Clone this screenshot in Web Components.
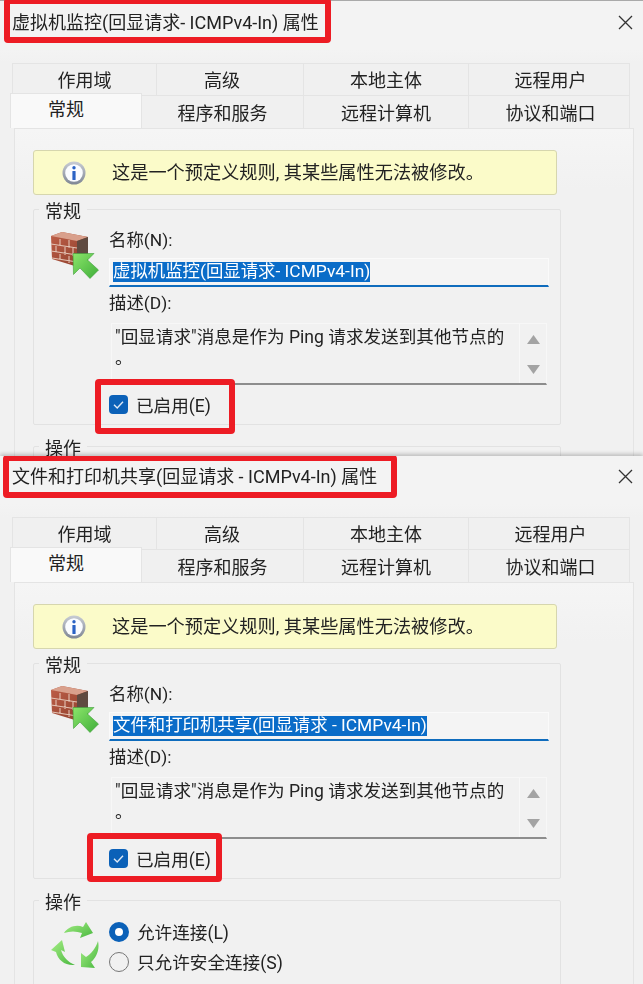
<!DOCTYPE html>
<html lang="zh-CN">
<head>
<meta charset="utf-8">
<title>防火墙规则属性</title>
<style>
  html, body { margin: 0; height: 984px; overflow: hidden; background: #f1f1f1; }
  body { font: 18px/24px Roboto, "Noto Sans CJK SC", sans-serif; color: #222; }
</style>
</head>
<body>

<rule-dialog style="height:456px; --title-h:63px; --title-top:10px; --top-line:#a9a9a9">
  <span slot="title">虚拟机监控(回显请求- ICMPv4-In) 属性</span>
  <red-mark style="left:4px; top:-2px; width:327px; height:45px"></red-mark>
  <tab-strip></tab-strip>
  <rule-panel>
    <info-bar>这是一个预定义规则, 其某些属性无法被修改。</info-bar>
    <group-box legend="常规">
      <wall-icon slot="icon"></wall-icon>
      <field-label>名称(N):</field-label>
      <name-field sel="虚拟机监控(回显请求- ICMPv4-In)"></name-field>
      <field-label style="margin-top:4px">描述(D):</field-label>
      <desc-field>"回显请求"消息是作为 Ping 请求发送到其他节点的<br>。</desc-field>
      <check-row>已启用(E)</check-row>
    </group-box>
    <group-box legend="操作" style="margin-top:7px"></group-box>
  </rule-panel>
  <red-mark style="left:95px; top:379px; width:140px; height:55px"></red-mark>
</rule-dialog>

<rule-dialog style="height:528px; --title-h:61px; --title-top:8px; --top-line:#f3f3f3">
  <span slot="title">文件和打印机共享(回显请求 - ICMPv4-In) 属性</span>
  <red-mark style="left:3px; top:-1px; width:394px; height:43px"></red-mark>
  <tab-strip></tab-strip>
  <rule-panel>
    <info-bar>这是一个预定义规则, 其某些属性无法被修改。</info-bar>
    <group-box legend="常规">
      <wall-icon slot="icon"></wall-icon>
      <field-label>名称(N):</field-label>
      <name-field sel="文件和打印机共享(回显请求 - ICMPv4-In)"></name-field>
      <field-label style="margin-top:4px">描述(D):</field-label>
      <desc-field>"回显请求"消息是作为 Ping 请求发送到其他节点的<br>。</desc-field>
      <check-row>已启用(E)</check-row>
    </group-box>
    <group-box legend="操作" style="margin-top:7px">
      <flow-icon slot="icon"></flow-icon>
      <radio-row checked style="margin-top:-2px">允许连接(L)</radio-row>
      <radio-row>只允许安全连接(S)</radio-row>
    </group-box>
  </rule-panel>
  <red-mark style="left:87px; top:377px; width:135px; height:49px"></red-mark>
</rule-dialog>

<script>
// small helper, every element here is just a template + open shadow root
function define(name, html, init) {
  const template = document.createElement('template');
  template.innerHTML = html;
  customElements.define(name, class extends HTMLElement {
    constructor() {
      super();
      this.attachShadow({mode: 'open'});
      this.shadowRoot.appendChild(template.content.cloneNode(true));
    }
    connectedCallback() {
      if (init) init(this, this.shadowRoot);
    }
  });
}

define('rule-dialog', `
<style>
  :host { display: block; position: relative; overflow: visible; background: #f1f1f1; box-shadow: 0 -2px 4px rgba(0,0,0,.22); }
  .clip { height: 100%; overflow: hidden; filter: blur(.3px); }
  .title { height: var(--title-h); box-sizing: border-box; padding: var(--title-top) 0 0 12px; background: linear-gradient(#f3f3f3 78%, #f1f1f1); border-top: 1px solid var(--top-line); display: flex; justify-content: space-between; align-items: flex-start; }
  .close { width: 15px; height: 15px; margin: 4px 10px 0 0; }
</style>
<div class="clip">
  <div class="title">
    <slot name="title"></slot>
    <svg class="close" viewBox="0 0 15 15"><path d="M1 1 14 14M14 1 1 14" stroke="#333" stroke-width="1.3" fill="none"/></svg>
  </div>
  <slot></slot>
</div>`);

define('red-mark', `
<style>
  :host { display: block; position: absolute; box-sizing: border-box; border: 6px solid #ed1c24; border-radius: 4px; z-index: 3; }
</style>`);

define('tab-item', `
<style>
  :host { display: flex; align-items: center; justify-content: center; box-sizing: border-box; height: 100%; padding-top: 3px; border: 1px solid #e4e4e4; border-width: 1px 1px 0 0; background: #f0f0f0; }
  :host([active]) { background: #f9f9f9; border-width: 1px 1px 0 1px; height: 35px; margin-top: -2px; padding-top: 0; padding-bottom: 3px; position: relative; z-index: 1; }
  :host([first]) { border-left: 1px solid #e4e4e4; }
</style>
<slot></slot>`);

define('tab-strip', `
<style>
  :host { display: block; }
  .row { display: flex; height: 32px; padding-left: 12px; }
  .row + .row { height: 33px; padding-left: 10px; }
</style>
<div class="row">
  <tab-item first style="width:145px">作用域</tab-item>
  <tab-item style="width:147px; padding-right:16px">高级</tab-item>
  <tab-item style="width:165px">本地主体</tab-item>
  <tab-item style="width:161px; padding-left:3px">远程用户</tab-item>
</div>
<div class="row">
  <tab-item active style="width:132px; padding-right:20px">常规</tab-item>
  <tab-item style="width:162px">程序和服务</tab-item>
  <tab-item style="width:165px">远程计算机</tab-item>
  <tab-item style="width:161px; padding-left:3px">协议和端口</tab-item>
</div>`);

define('rule-panel', `
<style>
  :host { display: block; box-sizing: border-box; width: 620px; margin-left: 14px; padding: 21px 0 0 18px; height: 900px; border: 1px solid #e4e4e4; border-width: 1px 1px 0 1px; background: linear-gradient(#f5f5f5, #f1f1f1 60px); }
</style>
<slot></slot>`);

define('info-bar', `
<style>
  :host { display: flex; align-items: center; box-sizing: border-box; width: 524px; height: 45px; padding: 0 0 0 28px; gap: 26px; background: #fbfbc9; border: 1px solid #d6d6ae; border-radius: 3px; font-size: 18.2px; }
  svg { width: 24px; height: 24px; flex: none; }
</style>
<svg viewBox="0 0 24 24">
  <defs><linearGradient id="ring" x1="0" y1="0" x2="0" y2="1"><stop offset="0" stop-color="#c8ccd4"/><stop offset="1" stop-color="#7f8794"/></linearGradient></defs>
  <circle cx="12" cy="12" r="11.5" fill="url(#ring)"/>
  <circle cx="12" cy="12" r="8.8" fill="#fafcff"/>
  <circle cx="12" cy="6.8" r="1.7" fill="#2a62c4"/>
  <rect x="10.4" y="10" width="3.2" height="9" rx=".6" fill="#2a62c4"/>
</svg>
<slot></slot>`);

define('group-box', `
<style>
  :host { display: block; width: 528px; }
  fieldset { margin: -1px 0 0; padding: 4px 11px 10px 16px; border: 1px solid #e2e2e2; border-radius: 2px; display: flex; min-width: 0; box-sizing: border-box; }
  legend { padding: 6px 6px 0; margin-left: -11px; line-height: 24px; }
  .body { display: flex; font-size: 17.6px; }
  .icon { width: 59px; flex: none; }
  .main { width: 440px; }
</style>
<fieldset>
  <legend></legend>
  <div class="body">
    <div class="icon"><slot name="icon"></slot></div>
    <div class="main"><slot></slot></div>
  </div>
</fieldset>`, (el, root) => {
  root.querySelector('legend').textContent = el.getAttribute('legend');
});

define('field-label', `
<style>:host { display: block; height: 24px; font-size: 17.4px; }</style>
<slot></slot>`);

define('name-field', `
<style>
  :host { display: block; box-sizing: border-box; height: 29px; margin-top: 6px; padding: 3px 0 0 3px; background: #f4f4f4; border: 1px solid #fafafa; border-bottom: 2px solid #0f6cbd; font-size: 17.4px; }
  span { display: block; width: fit-content; height: 20px; line-height: 18px; background: #0a6cc8; color: #fff; white-space: nowrap; }
</style>
<span></span>`, (el, root) => {
  root.querySelector('span').textContent = el.getAttribute('sel');
});

define('desc-field', `
<style>
  :host { display: flex; box-sizing: border-box; height: 62px; width: 436px; margin: 8px 0 0 2px; background: #f1f1f1; border: 1px solid #f7f7f7; border-bottom: 2px solid #8d8d8d; line-height: 21px; }
  .text { flex: 1; padding: 3px 0 0 3px; white-space: nowrap; overflow: hidden; }
  .bar { width: 27px; flex: none; border-left: 1px solid #f8f8f8; display: flex; flex-direction: column; align-items: center; justify-content: space-between; padding: 11px 0 9px; box-sizing: border-box; }
  svg { width: 13px; height: 9px; display: block; }
</style>
<div class="text"><slot></slot></div>
<div class="bar">
  <svg viewBox="0 0 13 9"><path d="M6.5 0 13 9H0z" fill="#a3a3a3"/></svg>
  <svg viewBox="0 0 13 9"><path d="M6.5 9 13 0H0z" fill="#a3a3a3"/></svg>
</div>`);

define('check-row', `
<style>
  :host { display: flex; align-items: center; gap: 8px; height: 19px; margin-top: 10px; }
  svg { width: 19px; height: 19px; flex: none; }
  span { margin-top: 2px; }
</style>
<svg viewBox="0 0 19 19">
  <rect width="19" height="19" rx="4" fill="#0b61b8"/>
  <path d="M5 9.8 8.2 13 14 6.8" stroke="#dfe9f5" stroke-width="1.4" fill="none"/>
</svg>
<span><slot></slot></span>`);

define('radio-row', `
<style>
  :host { display: flex; align-items: center; gap: 8px; height: 30px; }
  i { width: 20px; height: 20px; box-sizing: border-box; border-radius: 50%; flex: none; border: 1.5px solid #777; }
  :host([checked]) i { border: 6px solid #0b61b8; background: #fff; }
  span { margin-top: 2px; }
</style>
<i></i>
<span><slot></slot></span>`);

define('wall-icon', `
<style>
  :host { display: block; width: 50px; height: 47px; margin-top: 4px; }
  svg { width: 50px; height: 47px; display: block; }
</style>
<svg viewBox="0 0 50 47">
  <defs>
    <linearGradient id="brick" x1="0" y1="0" x2="1" y2="1"><stop offset="0" stop-color="#bf5f48"/><stop offset="1" stop-color="#8a3d2a"/></linearGradient>
    <linearGradient id="go" x1="0" y1="0" x2="1" y2="1"><stop offset="0" stop-color="#8be56a"/><stop offset="1" stop-color="#3fae3a"/></linearGradient>
  </defs>
  <path d="M1 4 12 0 38 5 38 31 28 35 2 27z" fill="url(#brick)"/>
  <path d="M1 4 12 0 38 5 27 9z" fill="#d9a08c"/>
  <path d="M27 9 38 5 38 31 27 35z" fill="#5f4a40"/>
  <path d="M1 12 27 16M1 19 27 23M2 26 27 30M10 7 10 14M19 8 19 16M6 14 6 21M15 15 15 23M23 16 23 24M10 22 10 28M19 24 19 31" stroke="#e3c3b4" stroke-width="1.1" fill="none"/>
  <path d="M23 21.5 44 21.5 37.5 28 48.5 38 40 46.5 30 36 23.5 42.5z" fill="url(#go)" stroke="#3f9f3a" stroke-width=".6"/>
</svg>`);

define('flow-icon', `
<style>
  :host { display: block; width: 50px; height: 50px; margin-top: 2px; }
  svg { width: 50px; height: 50px; display: block; }
</style>
<svg viewBox="0 0 50 50">
  <defs><linearGradient id="g" x1="0" y1="0" x2="1" y2="1"><stop offset="0" stop-color="#a6ee86"/><stop offset="1" stop-color="#48b73e"/></linearGradient></defs>
  <path d="M14 12C18 6 26 3 33 6L36 1 43 12 30 17 32 12C26 10 20 10 14 12z" fill="url(#g)"/>
  <path d="M1 29 12 19 15 31 11 29C13 36 18 41 25 44 15 45 8 39 6 31z" fill="url(#g)"/>
  <path d="M48 20C50 29 46 37 41 41L45 47 31 46 31 32 36 36C41 33 46 27 48 20z" fill="url(#g)"/>
</svg>`);
</script>
</body>
</html>
